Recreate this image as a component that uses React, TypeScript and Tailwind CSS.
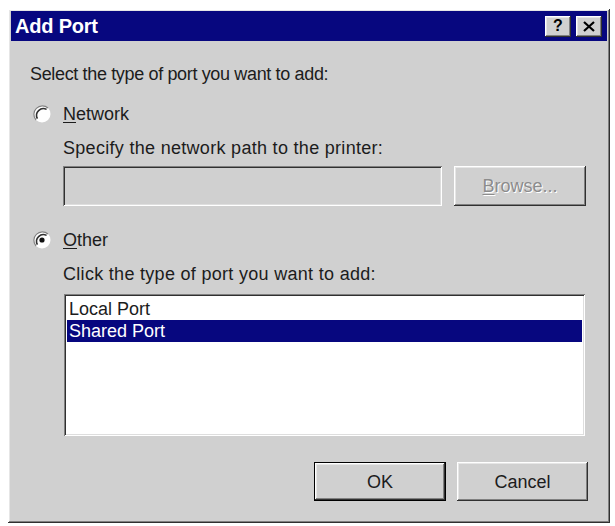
import React from "react";

// bordes en relieve estilo Windows 98
const raised =
  "shadow-[inset_-1px_-1px_0_#303030,inset_1px_1px_0_#ffffff,inset_-2px_-2px_0_#808080,inset_2px_2px_0_#e6e6e6]";
const sunken =
  "shadow-[inset_1px_1px_0_#808080,inset_-1px_-1px_0_#ffffff,inset_2px_2px_0_#303030,inset_-2px_-2px_0_#dedede]";

function Radio({ checked }: { checked: boolean }) {
  return (
    <svg width="18" height="18" viewBox="0 0 18 18" className="shrink-0">
      <circle cx="9" cy="9" r="8.5" fill="#ffffff" />
      <path d="M15 3 A8.5 8.5 0 0 0 3 15" fill="none" stroke="#808080" strokeWidth="1.2" />
      <path d="M13.6 4.4 A6.8 6.8 0 0 0 4.4 13.6" fill="none" stroke="#303030" strokeWidth="1.6" />
      {checked && <circle cx="9" cy="9" r="2.6" fill="#111111" />}
    </svg>
  );
}

function TitleButton({ children }: { children: React.ReactNode }) {
  return (
    <div
      className={`w-[26px] h-[21px] bg-[#d0d0d0] flex items-center justify-center text-[16px] font-bold text-black leading-none ${raised}`}
    >
      {children}
    </div>
  );
}

export default function App() {
  return (
    <div
      className="w-[615px] h-[526px] bg-white pt-[9px] pl-[8px]"
      style={{ fontFamily: '"Liberation Sans", Arial, sans-serif' }}
    >
      <div
        className={`w-[602px] h-[514px] bg-[#d0d0d0] flex flex-col p-[3px] pt-[2px] ${raised}`}
      >
        {/* barra de titulo */}
        <div className="h-[30px] bg-[#07077f] flex items-center justify-between pl-[4px] pr-[5px]">
          <span className="text-white font-bold text-[20px] tracking-[-0.2px]">Add Port</span>
          <div className="flex gap-[5px]">
            <TitleButton>?</TitleButton>
            <TitleButton>
              <svg width="12" height="11" viewBox="0 0 12 11">
                <path d="M1 1 L11 10 M11 1 L1 10" stroke="#000" strokeWidth="2.2" />
              </svg>
            </TitleButton>
          </div>
        </div>

        <div className="flex flex-col pl-[19px] text-[18px] text-[#1c1c1c] leading-[20px]">
          <div className="mt-[23px] h-[20px] tracking-[-0.35px]">Select the type of port you want to add:</div>

          <div className="mt-[20px] h-[20px] flex items-center">
            <div className="ml-[3px] mr-[12px]">
              <Radio checked={false} />
            </div>
            <span>
              <span className="underline underline-offset-2">N</span>etwork
            </span>
          </div>

          <div className="pl-[33px] flex flex-col">
            <div className="mt-[14px] h-[20px] tracking-[0.3px]">Specify the network path to the printer:</div>
            <div className="mt-[8px] flex h-[40px]">
              <div className={`w-[379px] h-[40px] bg-[#d0d0d0] ${sunken}`} />
              <div
                className={`ml-[12px] w-[132px] h-[40px] flex items-center justify-center text-[#8c8c8c] [text-shadow:1px_1px_0_#ffffff] ${raised}`}
              >
                <span>
                  <span className="underline underline-offset-2">B</span>rowse...
                </span>
              </div>
            </div>
          </div>

          <div className="mt-[24px] h-[20px] flex items-center">
            <div className="ml-[3px] mr-[12px]">
              <Radio checked={true} />
            </div>
            <span>
              <span className="underline underline-offset-2">O</span>ther
            </span>
          </div>

          <div className="pl-[33px] flex flex-col">
            <div className="mt-[14px] h-[20px] tracking-[0.3px]">Click the type of port you want to add:</div>
            <div
              className={`mt-[10px] ml-[1px] w-[521px] h-[142px] bg-white p-[3px] pt-[4px] flex flex-col ${sunken}`}
            >
              <div className="h-[22px] pl-[2px] flex items-center">Local Port</div>
              <div className="h-[22px] pl-[2px] flex items-center bg-[#07077f] text-white">Shared Port</div>
            </div>
          </div>

          {/* botones */}
          <div className="mt-[26px] flex justify-end gap-[11px] pr-[19px]">
            <div className="w-[132px] h-[39px] border border-black">
              <div className={`w-full h-full flex items-center justify-center ${raised}`}>OK</div>
            </div>
            <div className={`w-[131px] h-[39px] flex items-center justify-center ${raised}`}>Cancel</div>
          </div>
        </div>
      </div>
    </div>
  );
}
